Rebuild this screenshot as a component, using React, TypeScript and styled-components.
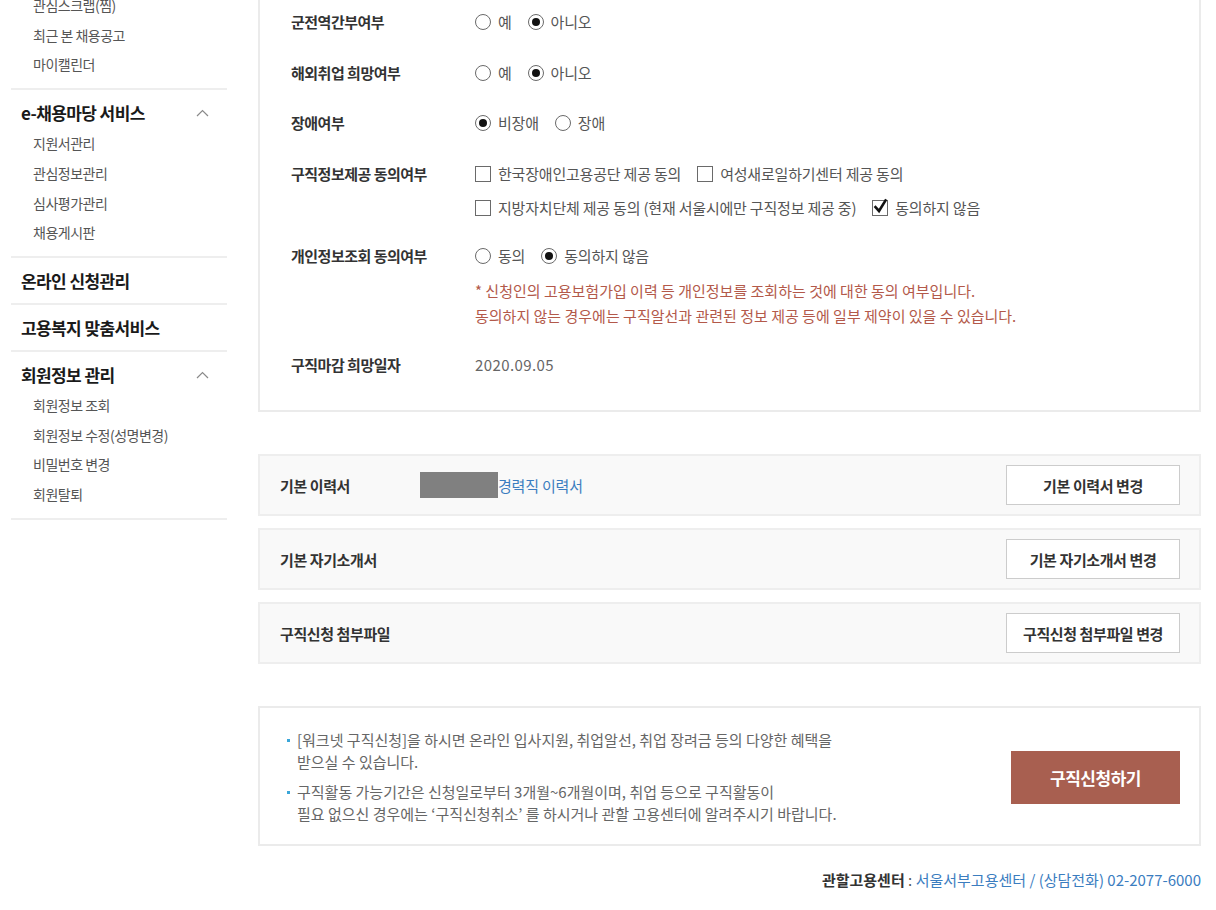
import React from 'react'
import styled, { createGlobalStyle } from 'styled-components'

const GlobalStyle = createGlobalStyle`
  html, body { margin: 0; padding: 0; background: #fff; }
  body {
    font-family: 'Noto Sans CJK KR', 'Noto Sans', sans-serif;
    color: #333;
  }
  * { box-sizing: border-box; }
`

interface MenuSection {
  title?: string
  open?: boolean
  items?: string[]
}

const menu: MenuSection[] = [
  { items: ['관심스크랩(찜)', '최근 본 채용공고', '마이캘린더'] },
  { title: 'e-채용마당 서비스', open: true, items: ['지원서관리', '관심정보관리', '심사평가관리', '채용게시판'] },
  { title: '온라인 신청관리' },
  { title: '고용복지 맞춤서비스' },
  { title: '회원정보 관리', open: true, items: ['회원정보 조회', '회원정보 수정(성명변경)', '비밀번호 변경', '회원탈퇴'] },
]

const Radio: React.FC<{ checked?: boolean; label: string }> = ({ checked, label }) => (
  <Option>
    <RadioMark $checked={checked} />
    {label}
  </Option>
)

const Checkbox: React.FC<{ checked?: boolean; label: string }> = ({ checked, label }) => (
  <Option>
    <CheckMark>
      {checked && (
        <svg width='16' height='16' viewBox='0 0 16 16'>
          <path d='M3.5 8.2 L7 12 L13.5 1.5' fill='none' stroke='#111' strokeWidth='2.6' strokeLinecap='square' />
        </svg>
      )}
    </CheckMark>
    {label}
  </Option>
)

const Chevron = () => (
  <svg width='13' height='8' viewBox='0 0 13 8'>
    <polyline points='1,7 6.5,1.5 12,7' fill='none' stroke='#8a8a8a' strokeWidth='1.2' />
  </svg>
)

const App: React.FC = () => {
  return (
    <>
      <GlobalStyle />
      <Page>
        <Sidebar>
          {menu.map((section, i) => (
            <Section key={i}>
              {section.title && (
                <SectionHeader $open={section.open}>
                  <span>{section.title}</span>
                  {section.open && <Chevron />}
                </SectionHeader>
              )}
              {section.items && (
                <SubList>
                  {section.items.map((item) => (
                    <SubItem key={item}>{item}</SubItem>
                  ))}
                </SubList>
              )}
            </Section>
          ))}
        </Sidebar>

        <Main>
          <FormBox>
            <FormRow>
              <FieldLabel>군전역간부여부</FieldLabel>
              <OptionList>
                <Radio label='예' />
                <Radio label='아니오' checked />
              </OptionList>
            </FormRow>
            <FormRow>
              <FieldLabel>해외취업 희망여부</FieldLabel>
              <OptionList>
                <Radio label='예' />
                <Radio label='아니오' checked />
              </OptionList>
            </FormRow>
            <FormRow>
              <FieldLabel>장애여부</FieldLabel>
              <OptionList>
                <Radio label='비장애' checked />
                <Radio label='장애' />
              </OptionList>
            </FormRow>
            <FormRow $bottom={12}>
              <FieldLabel>구직정보제공 동의여부</FieldLabel>
              <OptionList>
                <Checkbox label='한국장애인고용공단 제공 동의' />
                <Checkbox label='여성새로일하기센터 제공 동의' />
                <Checkbox label='지방자치단체 제공 동의 (현재 서울시에만 구직정보 제공 중)' />
                <Checkbox label='동의하지 않음' checked />
              </OptionList>
            </FormRow>
            <FormRow $bottom={12}>
              <FieldLabel>개인정보조회 동의여부</FieldLabel>
              <FieldValue>
                <OptionList>
                  <Radio label='동의' />
                  <Radio label='동의하지 않음' checked />
                </OptionList>
                <Notice>
                  * 신청인의 고용보험가입 이력 등 개인정보를 조회하는 것에 대한 동의 여부입니다.
                  <br />
                  동의하지 않는 경우에는 구직알선과 관련된 정보 제공 등에 일부 제약이 있을 수 있습니다.
                </Notice>
              </FieldValue>
            </FormRow>
            <FormRow>
              <FieldLabel>구직마감 희망일자</FieldLabel>
              <DateText>2020.09.05</DateText>
            </FormRow>
          </FormBox>

          <DocList>
            <DocRow>
              <DocLabel>기본 이력서</DocLabel>
              <DocValue>
                <Masked />
                <DocLink>경력직 이력서</DocLink>
              </DocValue>
              <OutlineButton>기본 이력서 변경</OutlineButton>
            </DocRow>
            <DocRow>
              <DocLabel>기본 자기소개서</DocLabel>
              <DocValue />
              <OutlineButton>기본 자기소개서 변경</OutlineButton>
            </DocRow>
            <DocRow>
              <DocLabel>구직신청 첨부파일</DocLabel>
              <DocValue />
              <OutlineButton>구직신청 첨부파일 변경</OutlineButton>
            </DocRow>
          </DocList>

          <InfoBox>
            <InfoList>
              <InfoItem>
                [워크넷 구직신청]을 하시면 온라인 입사지원, 취업알선, 취업 장려금 등의 다양한 혜택을
                <br />
                받으실 수 있습니다.
              </InfoItem>
              <InfoItem>
                구직활동 가능기간은 신청일로부터 3개월~6개월이며, 취업 등으로 구직활동이
                <br />
                필요 없으신 경우에는 ‘구직신청취소’ 를 하시거나 관할 고용센터에 알려주시기 바랍니다.
              </InfoItem>
            </InfoList>
            <SubmitButton>구직신청하기</SubmitButton>
          </InfoBox>

          <Footer>
            <strong>관할고용센터</strong>
            <Colon> : </Colon>
            <FooterLink>서울서부고용센터 / (상담전화) 02-2077-6000</FooterLink>
          </Footer>
        </Main>
      </Page>
    </>
  )
}

const Page = styled.div`
  display: flex;
  align-items: flex-start;
  gap: 31px;
  width: 1216px;
  margin-top: -9px;
  padding: 0 15px 0 11px;
`

const Sidebar = styled.nav`
  width: 216px;
  flex-shrink: 0;
`

const Section = styled.div`
  border-bottom: 2px solid #eeeeee;
`

const SectionHeader = styled.div<{ $open?: boolean }>`
  display: flex;
  align-items: center;
  justify-content: space-between;
  padding: 11px 18px ${({ $open }) => ($open ? 4 : 10)}px 10px;
  font-size: 17px;
  font-weight: 700;
  line-height: 24px;
  letter-spacing: -0.6px;
  color: #1a1a1a;
`

const SubList = styled.ul`
  list-style: none;
  margin: 0;
  padding: 0 0 8px 22px;
`

const SubItem = styled.li`
  font-size: 14px;
  line-height: 29.7px;
  letter-spacing: -0.5px;
  color: #555;
`

const Main = styled.main`
  flex: 1;
  min-width: 0;
`

const FormBox = styled.section`
  border: 2px solid #ebebeb;
  padding: 4px 31px 20px;
`

const FormRow = styled.div<{ $bottom?: number }>`
  display: flex;
  align-items: flex-start;
  padding: 14px 0 ${({ $bottom }) => $bottom ?? 14.5}px;
`

const FieldLabel = styled.div`
  width: 184px;
  flex-shrink: 0;
  font-size: 15px;
  font-weight: 700;
  line-height: 22px;
  letter-spacing: -0.5px;
  color: #333;
`

const FieldValue = styled.div`
  flex: 1;
  min-width: 0;
`

const OptionList = styled.div`
  flex: 1;
  display: flex;
  flex-wrap: wrap;
  column-gap: 16px;
  row-gap: 12px;
`

const Option = styled.label`
  display: inline-flex;
  align-items: center;
  gap: 7px;
  font-size: 15px;
  line-height: 22px;
  letter-spacing: -0.2px;
  color: #555;
`

const RadioMark = styled.span<{ $checked?: boolean }>`
  position: relative;
  width: 16px;
  height: 16px;
  border: 1px solid #6a6a6a;
  border-radius: 50%;
  background: #fff;

  &::after {
    content: '';
    display: ${({ $checked }) => ($checked ? 'block' : 'none')};
    position: absolute;
    left: 3px;
    top: 3px;
    width: 8px;
    height: 8px;
    border-radius: 50%;
    background: #111;
  }
`

const CheckMark = styled.span`
  display: inline-flex;
  width: 16px;
  height: 16px;
  border: 1px solid #6a6a6a;
  background: #fff;

  svg {
    margin: -2px 0 0 -1px;
    overflow: visible;
  }
`

const Notice = styled.p`
  margin: 11px 0 0;
  font-size: 15px;
  line-height: 25px;
  letter-spacing: 0;
  color: #b3594a;
`

const DateText = styled.div`
  font-size: 15px;
  line-height: 22px;
  letter-spacing: 0.4px;
  color: #666;
`

const DocList = styled.div`
  display: flex;
  flex-direction: column;
  gap: 12px;
  margin-top: 42px;
`

const DocRow = styled.div`
  display: flex;
  align-items: center;
  padding: 9px 19px 9px 20px;
  border: 2px solid #eeeeee;
  background: #f9f9f9;
`

const DocLabel = styled.div`
  width: 140px;
  flex-shrink: 0;
  font-size: 15px;
  font-weight: 600;
  letter-spacing: -0.4px;
  color: #333;
`

const DocValue = styled.div`
  flex: 1;
  display: flex;
  align-items: center;
`

const Masked = styled.span`
  width: 78px;
  height: 26px;
  background: #808080;
`

const DocLink = styled.a`
  font-size: 15px;
  letter-spacing: -0.2px;
  color: #3b7dbf;
`

const OutlineButton = styled.button`
  width: 174px;
  height: 40px;
  border: 1px solid #cccccc;
  background: #fff;
  font-family: inherit;
  font-size: 15px;
  font-weight: 600;
  letter-spacing: -0.4px;
  color: #333;
`

const InfoBox = styled.section`
  display: flex;
  align-items: center;
  justify-content: space-between;
  margin-top: 42px;
  padding: 21px 19px 19px 27px;
  border: 2px solid #ebebeb;
`

const InfoList = styled.ul`
  list-style: none;
  margin: 0;
  padding: 0;
  display: flex;
  flex-direction: column;
  gap: 8px;
`

const InfoItem = styled.li`
  position: relative;
  padding-left: 10px;
  font-size: 15px;
  line-height: 22px;
  letter-spacing: 0;
  color: #666;

  &::before {
    content: '';
    position: absolute;
    left: 0;
    top: 10px;
    width: 3px;
    height: 3px;
    background: #3ba6d9;
  }
`

const SubmitButton = styled.button`
  width: 169px;
  height: 53px;
  border: none;
  background: #a85f50;
  font-family: inherit;
  font-size: 17px;
  font-weight: 700;
  letter-spacing: -0.5px;
  color: #fff;
`

const Footer = styled.p`
  margin: 23px 0 0;
  text-align: right;
  font-size: 15px;
  line-height: 22px;
  letter-spacing: 0;
  color: #333;

  strong {
    font-weight: 700;
  }
`

const Colon = styled.span`
  color: #555;
`

const FooterLink = styled.a`
  color: #3b7dbf;
`

export default App
